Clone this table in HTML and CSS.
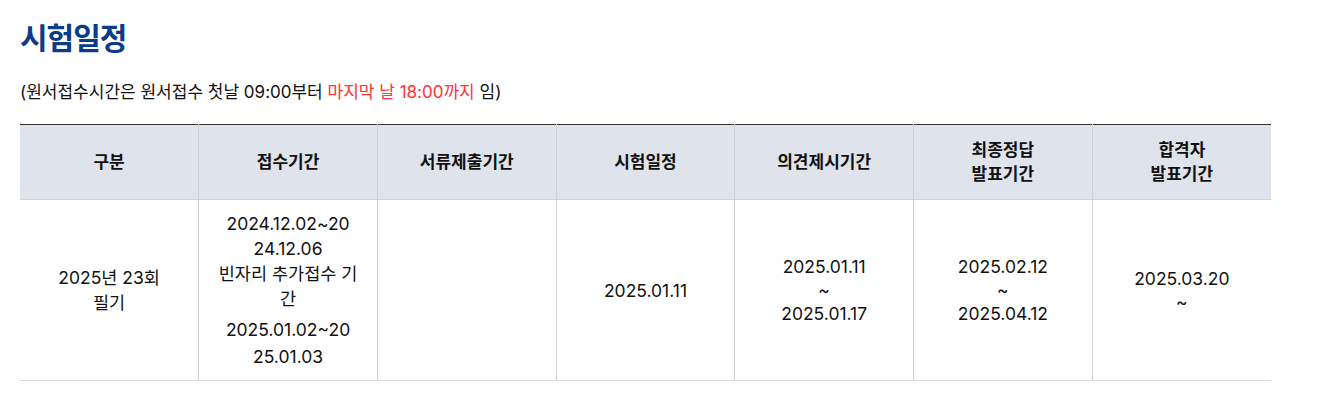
FILE: index.html
```html
<!DOCTYPE html>
<html lang="ko">
<head>
<meta charset="utf-8">
<title>시험일정</title>
<link rel="stylesheet" href="styles.css">
</head>
<body>
<div class="page">
  <h2 class="title">시험일정</h2>
  <p class="note">(원서접수시간은 원서접수 첫날 09:00부터 <span class="red">마지막 날 18:00까지</span> 임)</p>
  <table class="schedule">
    <thead>
      <tr>
        <th>구분</th>
        <th>접수기간</th>
        <th>서류제출기간</th>
        <th>시험일정</th>
        <th>의견제시기간</th>
        <th>최종정답<br>발표기간</th>
        <th>합격자<br>발표기간</th>
      </tr>
    </thead>
    <tbody>
      <tr>
        <td>2025년 23회<br>필기</td>
        <td>
          <div class="lines">2024.12.02~20<br>24.12.06<br>빈자리 추가접수 기<br>간</div>
          <div class="lines extra">2025.01.02~20<br>25.01.03</div>
        </td>
        <td></td>
        <td>2025.01.11</td>
        <td class="tight">2025.01.11<br>~<br>2025.01.17</td>
        <td class="tight">2025.02.12<br>~<br>2025.04.12</td>
        <td class="tight">2025.03.20<br>~</td>
      </tr>
    </tbody>
  </table>
</div>
</body>
</html>
```

FILE: styles.css
```css
* { box-sizing: border-box; }
html, body { margin: 0; padding: 0; background: #fff; }
body {
  font-family: "Inter", "Noto Sans CJK KR", sans-serif;
  color: #111;
}
.page {
  padding: 16px 20px 0 20px;
  width: 1271px;
}
.title {
  margin: 0;
  font-family: "Noto Sans CJK KR", sans-serif;
  font-size: 30px;
  font-weight: 700;
  line-height: 40px;
  letter-spacing: -1px;
  color: #0b3c8a;
}
.note {
  margin: 24px 0 0 0;
  font-size: 17px;
  line-height: 24px;
  color: #111;
}
.red { color: #ff3333; }
.schedule {
  margin-top: 20px;
  width: 1251px;
  border-collapse: collapse;
  table-layout: fixed;
  border-top: 1px solid #333;
  border-bottom: 1px solid #d9d9d9;
}
.schedule th {
  background: #dfe3eb;
  height: 75px;
  font-size: 17px;
  font-weight: 700;
  line-height: 24px;
  color: #111;
  text-align: center;
  vertical-align: middle;
  border-left: 1px solid #d2d2d2;
  padding: 0;
}
.schedule td {
  height: 181px;
  font-size: 17.5px;
  line-height: 25px;
  color: #111;
  text-align: center;
  vertical-align: middle;
  border-left: 1px solid #d2d2d2;
  border-top: 1px solid #d2d2d2;
  padding: 0;
}
.schedule th:first-child,
.schedule td:first-child { border-left: none; }
.schedule td.tight { line-height: 23.5px; }
.lines.extra { margin-top: 5px; line-height: 27px; }
```
